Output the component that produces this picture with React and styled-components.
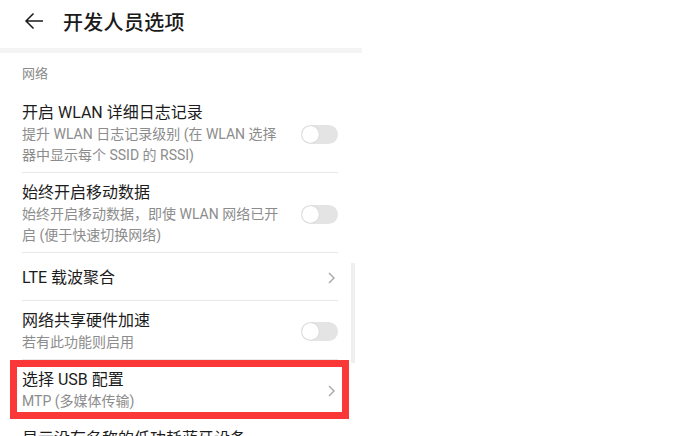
import React from "react";
import styled, { createGlobalStyle } from "styled-components";

const Global = createGlobalStyle`
  html, body { margin: 0; padding: 0; background: #fff; }
  body { font-family: Roboto, "Noto Sans CJK SC", sans-serif; -webkit-font-smoothing: antialiased; }
`;

const Screen = styled.div`
  position: relative;
  width: 362px;
  height: 436px;
  overflow: hidden;
  background: #fff;
  display: flex;
  flex-direction: column;
  & > * { flex-shrink: 0; }
`;

const Header = styled.div`
  display: flex;
  align-items: center;
  padding-left: 24px;
  gap: 19px;
  box-sizing: border-box;
  border-bottom: 5px solid #f4f4f4;
  height: 53px;
  padding-bottom: 6px;
`;

const Title = styled.div`
  font-family: "Noto Sans CJK SC", sans-serif;
  font-size: 20px;
  font-weight: 500;
  color: #1a1a1a;
  letter-spacing: 0.3px;
`;

const SectionLabel = styled.div`
  padding: 10px 22px 0;
  line-height: 20px;
  height: 30px;
  font-size: 13px;
  color: #8a8a8a;
  font-family: "Noto Sans CJK SC", sans-serif;
`;

const Item = styled.div`
  position: relative;
  margin: 0 24px 0 22px;
  padding: ${(p) => (p.$single ? "14px 0 11px" : "9px 0 6px")};
  display: flex;
  align-items: center;
  gap: 12px;
  border-bottom: 1px solid #e8e8e8;
`;

const Texts = styled.div`
  flex: 1;
  display: flex;
  flex-direction: column;
`;

const ItemTitle = styled.div`
  font-size: 16px;
  line-height: 22px;
  color: #1c1c1c;
  font-family: Roboto, "Noto Sans CJK SC", sans-serif;
`;

const Sub = styled.div`
  font-size: 14px;
  line-height: 21px;
  color: #8c8c8c;
  font-family: Roboto, "Noto Sans CJK SC", sans-serif;
`;

const Track = styled.div`
  width: 37px;
  height: 19px;
  border-radius: 10px;
  background: #e4e4e4;
  position: relative;
  flex-shrink: 0;
`;

const Thumb = styled.div`
  position: absolute;
  left: 1px;
  top: 1px;
  width: 17px;
  height: 17px;
  border-radius: 50%;
  background: #fff;
  box-shadow: 0 0 1px rgba(0, 0, 0, 0.25);
`;

const Highlight = styled.div`
  position: absolute;
  left: -12px;
  right: -11px;
  top: 0px;
  bottom: -1px;
  border: 7px solid #fb3838;
  pointer-events: none;
`;

const Scrollbar = styled.div`
  position: absolute;
  left: 351px;
  top: 263px;
  width: 4px;
  height: 100px;
  background: #efefef;
`;

const Toggle = () => (
  <Track>
    <Thumb />
  </Track>
);

const Chevron = () => (
  <svg width="10" height="14" viewBox="0 0 10 14" style={{ flexShrink: 0, marginRight: 2 }}>
    <path d="M3 2 L8 7 L3 12" fill="none" stroke="#a6a6a6" strokeWidth="1.4" />
  </svg>
);

const BackArrow = () => (
  <svg width="20" height="18" viewBox="0 0 20 18">
    <path d="M19 9 H2 M9.5 1.5 L2 9 L9.5 16.5" fill="none" stroke="#1a1a1a" strokeWidth="1.5" />
  </svg>
);

export default function App() {
  return (
    <>
      <Global />
      <Screen>
        <Header>
          <BackArrow />
          <Title>开发人员选项</Title>
        </Header>
        <SectionLabel>网络</SectionLabel>
        <Item>
          <Texts>
            <ItemTitle>开启 WLAN 详细日志记录</ItemTitle>
            <Sub>提升 WLAN 日志记录级别 (在 WLAN 选择<br />器中显示每个 SSID 的 RSSI)</Sub>
          </Texts>
          <Toggle />
        </Item>
        <Item>
          <Texts>
            <ItemTitle>始终开启移动数据</ItemTitle>
            <Sub>始终开启移动数据，即使 WLAN 网络已开<br />启 (便于快速切换网络)</Sub>
          </Texts>
          <Toggle />
        </Item>
        <Item $single>
          <Texts>
            <ItemTitle>LTE 载波聚合</ItemTitle>
          </Texts>
          <Chevron />
        </Item>
        <Item>
          <Texts>
            <ItemTitle>网络共享硬件加速</ItemTitle>
            <Sub>若有此功能则启用</Sub>
          </Texts>
          <Toggle />
        </Item>
        <Item>
          <Texts>
            <ItemTitle>选择 USB 配置</ItemTitle>
            <Sub>MTP (多媒体传输)</Sub>
          </Texts>
          <Chevron />
          <Highlight />
        </Item>
        <Item>
          <Texts>
            <ItemTitle>显示没有名称的低功耗蓝牙设备</ItemTitle>
          </Texts>
        </Item>
        <Scrollbar />
      </Screen>
    </>
  );
}
